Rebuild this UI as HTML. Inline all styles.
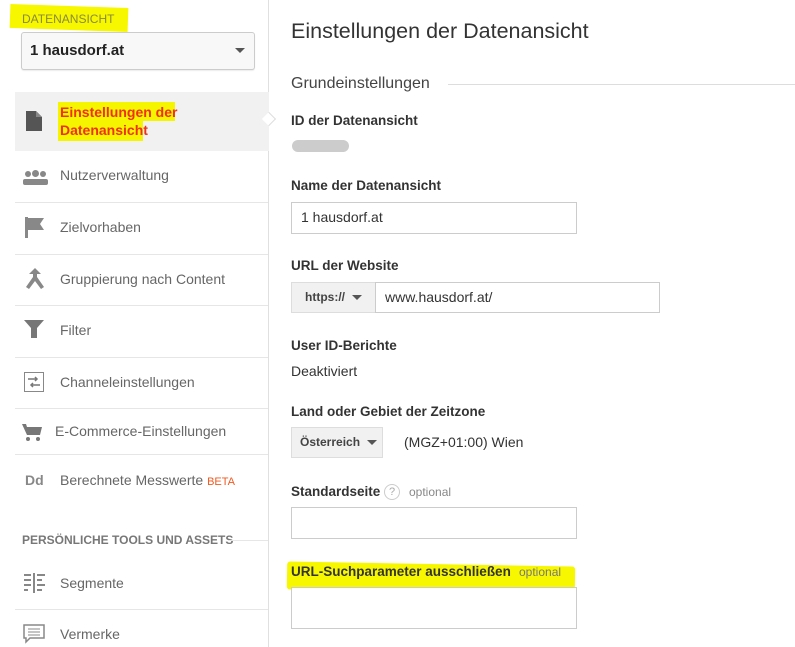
<!DOCTYPE html>
<html><head><meta charset="utf-8"><style>
*{margin:0;padding:0;box-sizing:border-box}
body{width:795px;height:647px;overflow:hidden;background:#fff;font-family:"Liberation Sans",Arial,sans-serif;color:#333;position:relative}
.a{position:absolute;white-space:nowrap}
.side{position:absolute;left:0;top:0;width:269px;height:647px;border-right:1px solid #e0e0e0}
.item{position:absolute;left:15px;width:253px;border-bottom:1px solid #e6e6e6}
.lbl{position:absolute;font-size:14px;color:#666}
.fl{font-size:13.5px;font-weight:bold;color:#333}
.box{position:absolute;border:1px solid #ccc;background:#fff}
.btn{position:absolute;border:1px solid #ddd;background:#f1f1f1;font-size:13px;font-weight:bold;color:#444}
.tri{display:inline-block;width:0;height:0;border-left:5px solid transparent;border-right:5px solid transparent;border-top:5px solid #555;vertical-align:middle}
</style></head><body>
<div class="side"></div>
<div class="a" style="left:10px;top:6px;width:118px;height:24px;background:#f7f700;transform:rotate(2deg)"></div>
<div class="a" style="left:22px;top:12px;font-size:12px;color:#8a8a3a">DATENANSICHT</div>
<div class="a" style="left:21px;top:32px;width:234px;height:38px;border:1px solid #ccc;border-radius:3px;background:#f8f8f8;box-shadow:0 1px 1px rgba(0,0,0,.08)"></div>
<div class="a" style="left:30px;top:42px;font-size:15px;font-weight:bold;color:#222">1 hausdorf.at</div>
<div class="a" style="left:235px;top:48px;width:10px;height:5px;border-left:5px solid transparent;border-right:5px solid transparent;border-top:5px solid #555"></div>

<div class="a" style="left:15px;top:92px;width:254px;height:59px;background:#f1f1f1"></div>
<div class="a" style="left:58px;top:102px;width:117px;height:19px;background:#f5f500"></div>
<div class="a" style="left:58px;top:121px;width:85px;height:20px;background:#f5f500"></div>
<div class="a" style="left:60px;top:103px;font-size:14px;line-height:18px;color:#f03010;font-weight:bold">Einstellungen der<br>Datenansicht</div>
<svg class="a" style="left:26px;top:111px" width="16" height="20" viewBox="0 0 16 20"><path d="M0 0h10l6 6v14H0z" fill="#555"/><path d="M10 0v6h6" fill="#888"/></svg>

<div class="item" style="top:151px;height:52px"></div>
<svg class="a" style="left:23px;top:170px" width="25" height="15" viewBox="0 0 25 15"><circle cx="5" cy="4" r="3" fill="#888"/><circle cx="12.5" cy="3.5" r="3.5" fill="#888"/><circle cx="20" cy="4" r="3" fill="#888"/><rect x="0" y="9" width="25" height="6" rx="2" fill="#888"/></svg>
<div class="lbl" style="left:60px;top:167px">Nutzerverwaltung</div>
<div class="item" style="top:203px;height:52px"></div>
<svg class="a" style="left:25px;top:217px" width="21" height="21" viewBox="0 0 21 21"><path d="M0 0h3v21H0z M3 1h16l-4 6 4 6H3z" fill="#888"/></svg>
<div class="lbl" style="left:60px;top:219px">Zielvorhaben</div>
<div class="item" style="top:255px;height:51px"></div>
<svg class="a" style="left:25px;top:268px" width="20" height="22" viewBox="0 0 20 22"><path d="M10 0l6 6h-4v3l7 10-3 2-6-8-6 8-3-2 7-10V6H4z" fill="#888"/></svg>
<div class="lbl" style="left:60px;top:271px">Gruppierung nach Content</div>
<div class="item" style="top:306px;height:52px"></div>
<svg class="a" style="left:24px;top:320px" width="20" height="18" viewBox="0 0 20 18"><path d="M0 0h20l-7 8v10h-6V8z" fill="#777"/></svg>
<div class="lbl" style="left:60px;top:322px">Filter</div>
<div class="item" style="top:358px;height:51px"></div>
<svg class="a" style="left:24px;top:372px" width="20" height="20" viewBox="0 0 20 20"><rect x=".5" y=".5" width="19" height="19" fill="none" stroke="#888"/><path d="M4 7h9M11 5l2 2-2 2M16 13H7M9 11l-2 2 2 2" stroke="#777" stroke-width="1.5" fill="none"/></svg>
<div class="lbl" style="left:60px;top:374px">Channeleinstellungen</div>
<div class="item" style="top:409px;height:46px"></div>
<svg class="a" style="left:22px;top:424px" width="20" height="18" viewBox="0 0 20 18"><path d="M0 0h4l1 3h15l-2 8H5z" fill="#777"/><circle cx="6" cy="15" r="2" fill="#777"/><circle cx="16" cy="15" r="2" fill="#777"/></svg>
<div class="lbl" style="left:55px;top:423px">E-Commerce-Einstellungen</div>
<div class="a" style="left:25px;top:472px;font-size:14px;font-weight:bold;color:#888">Dd</div>
<div class="lbl" style="left:60px;top:472px">Berechnete Messwerte <span style="font-size:11px;color:#f05a20">BETA</span></div>
<div class="a" style="left:22px;top:533px;font-size:12px;font-weight:bold;color:#777">PERSÖNLICHE TOOLS UND ASSETS</div>
<div class="a" style="left:228px;top:540px;width:40px;border-top:1px solid #e6e6e6"></div>
<svg class="a" style="left:24px;top:573px" width="22" height="20" viewBox="0 0 22 20"><path d="M10 0v20M0 2h7M0 7h7M0 12h7M0 17h4M13 2h8M13 7h5M13 12h8M13 17h5" stroke="#888" stroke-width="2"/></svg>
<div class="lbl" style="left:60px;top:575px">Segmente</div>
<div class="item" style="top:558px;height:52px"></div>
<svg class="a" style="left:23px;top:624px" width="22" height="20" viewBox="0 0 22 20"><path d="M1 1h20v13H7l-4 4v-4H1z" fill="none" stroke="#888" stroke-width="1.5"/><path d="M5 5h12M5 8h12M5 11h12" stroke="#888"/></svg>
<div class="lbl" style="left:60px;top:626px">Vermerke</div>
<div class="a" style="left:264px;top:114px;width:10px;height:10px;background:#fff;border-right:1px solid #ddd;border-top:1px solid #ddd;transform:rotate(45deg)"></div>

<div class="a" style="left:291px;top:19px;font-size:21.5px;color:#333">Einstellungen der Datenansicht</div>
<div class="a" style="left:291px;top:75px;font-size:16px;color:#444">Grundeinstellungen</div>
<div class="a" style="left:448px;top:84px;width:347px;border-top:1px solid #ddd"></div>
<div class="a fl" style="left:291px;top:113px">ID der Datenansicht</div>
<div class="a" style="left:292px;top:140px;width:57px;height:12px;border-radius:6px;background:#ccc"></div>
<div class="a fl" style="left:291px;top:178px">Name der Datenansicht</div>
<div class="box" style="left:291px;top:202px;width:286px;height:32px"></div>
<div class="a" style="left:301px;top:209px;font-size:14px">1 hausdorf.at</div>
<div class="a fl" style="left:291px;top:258px">URL der Website</div>
<div class="btn" style="left:291px;top:282px;width:85px;height:31px"></div>
<div class="a" style="left:305px;top:290px;font-size:12px;font-weight:bold;color:#444">https:// &nbsp;<span class="tri"></span></div>
<div class="box" style="left:375px;top:282px;width:285px;height:31px"></div>
<div class="a" style="left:385px;top:289px;font-size:14px">www.hausdorf.at/</div>
<div class="a fl" style="left:291px;top:338px">User ID-Berichte</div>
<div class="a" style="left:291px;top:363px;font-size:14px">Deaktiviert</div>
<div class="a fl" style="left:291px;top:404px">Land oder Gebiet der Zeitzone</div>
<div class="btn" style="left:291px;top:427px;width:92px;height:31px"></div>
<div class="a" style="left:300px;top:435px;font-size:12px;font-weight:bold;color:#444">Österreich &nbsp;<span class="tri"></span></div>
<div class="a" style="left:404px;top:434px;font-size:14px">(MGZ+01:00) Wien</div>
<div class="a fl" style="left:291px;top:484px">Standardseite</div>
<div class="a" style="left:384px;top:484px;width:16px;height:16px;border:1px solid #ccc;border-radius:50%;font-size:11px;color:#aaa;text-align:center;line-height:14px">?</div>
<div class="a" style="left:409px;top:485px;font-size:12px;color:#888">optional</div>
<div class="box" style="left:291px;top:507px;width:286px;height:32px"></div>
<div class="a" style="left:287px;top:564px;width:288px;height:28px;background:#f7f700;border-radius:3px;transform:rotate(1deg)"></div>
<div class="a fl" style="left:291px;top:564px">URL-Suchparameter ausschließen</div>
<div class="a" style="left:519px;top:565px;font-size:12px;color:#777">optional</div>
<div class="box" style="left:291px;top:587px;width:286px;height:42px"></div>
</body></html>
